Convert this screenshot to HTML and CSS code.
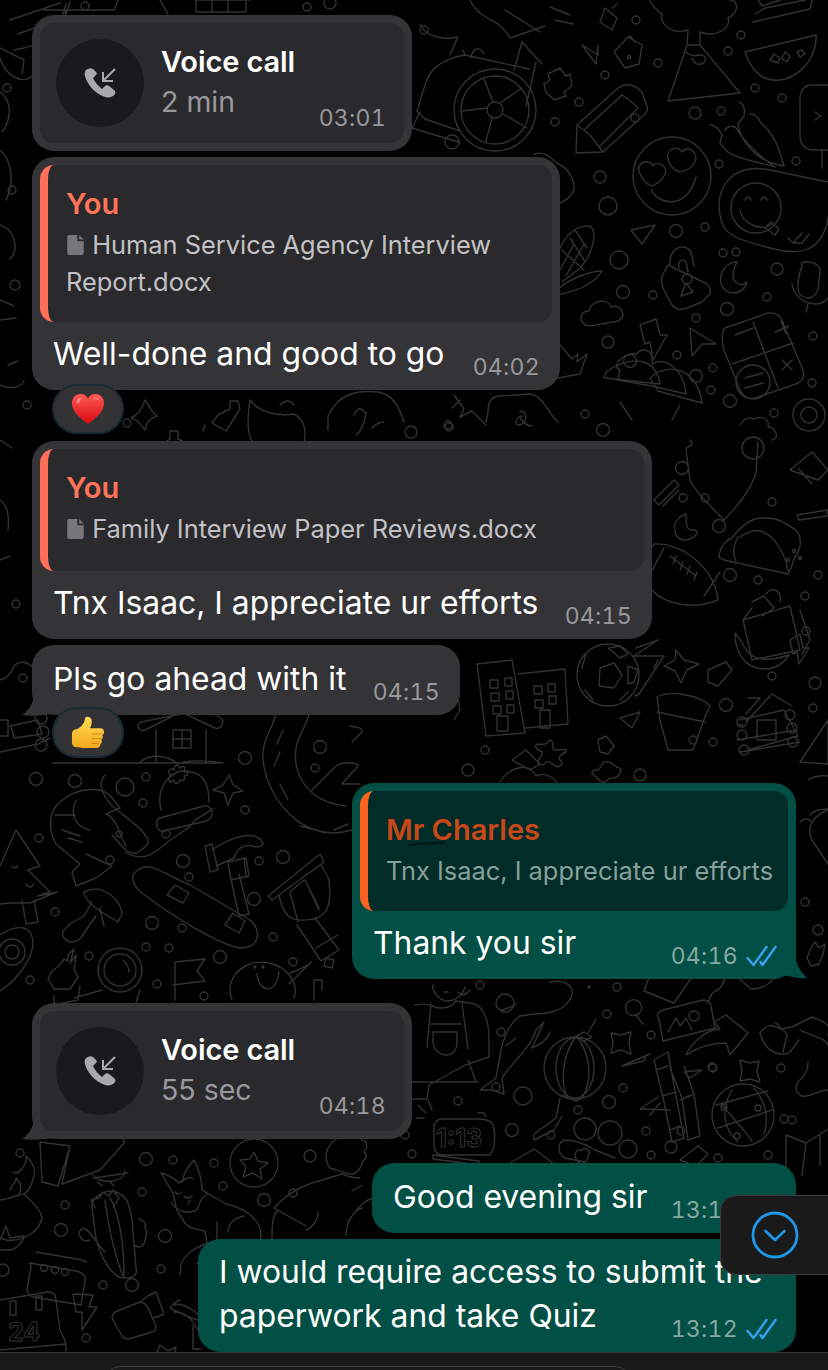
FILE: index.html
```html
<!DOCTYPE html>
<html lang="en">
<head>
<meta charset="utf-8">
<title>Chat</title>
<link rel="stylesheet" href="styles.css">
</head>
<body>
<div class="screen">
<svg class="doodles" viewBox="0 0 828 1370" aria-hidden="true">
  <!-- top row -->
  <path d="M10 20 L60 3 M18 34 L62 18 L66 4 M14 50q50 -8 52 -40 M0 58 C6 78 24 84 32 76 M70 2 l-6 18 M0 48l24 12 -2 14"/>
  <circle cx="85" cy="6" r="4"/><circle cx="7" cy="88" r="4"/>
  <path d="M118 0 l-4 10 -70 0 M160 0 l8 14 M195 0 l55 0 M196 0v12h50V0 M212 0v12 M228 0v12"/>
  <circle cx="307" cy="7" r="4"/><circle cx="330" cy="3" r="6"/><circle cx="424" cy="30" r="4"/>
  <!-- wheelchair -->
  <circle cx="495" cy="110" r="41"/><circle cx="495" cy="110" r="34"/><circle cx="495" cy="110" r="8"/>
  <path d="M487 108l-25 3 M500 103l22-15 M503 114l24 14 M492 118l-6 23 M493 102l-9-23"/>
  <path d="M465 55q-34 6 -40 30 l-8 26 8 8 35 12 M465 55l64 14 M463 50l2 5 M472 58c-2-8 8-14 12-4 M514 70l8-28 20 22 M536 62l-10 44 M420 112l-8 16 46 14 M452 135a7 7 0 1 0 0.1 0"/>
  <path d="M420 25c6 10 20 16 38 12l-8 18 M470 0c10 22 28 16 40 38l35-12 M505 10l35 22 M555 20l18 4 M550 7l20 8"/>
  <path d="M605 8 L617 18 612 30 600 22z M612 8l5-4 M628 37l14 8 -3 19 -14 4 -11-16z M627 38l3-2 5 6" />
  <circle cx="629" cy="57" r="1.5"/><circle cx="636" cy="20" r="4"/>
  <path d="M582 45l16 10 0-10 -2 19z"/>
  <path d="M548 74l12-6 6 8 4-2 2 12 -8 6 2 4 -12 4 -8-8 -2 -8 6-4z"/>
  <circle cx="579" cy="102" r="4"/><circle cx="555" cy="122" r="4"/><circle cx="605" cy="75" r="4"/>
  <circle cx="658" cy="63" r="4"/><circle cx="635" cy="118" r="4"/><circle cx="695" cy="113" r="6"/><circle cx="721" cy="111" r="4"/>
  <!-- pencil -->
  <path d="M576 153 L577 125 L618 88 Q630 80 642 92 L646 104 Q650 110 644 115 L603 152 Z M577 125 L590 135 L603 152 M622 95 L584 130 M638 108 L600 146 M622 95 Q630 100 638 108"/>
  <!-- volcano -->
  <path d="M668 101 L740 93 L700 45 L687 45 Z M687 45 L688 30 C672 35 660 25 662 14 C650 5 650 0 650 0 M700 45 L700 32 C716 38 732 28 728 18 C740 12 738 0 730 0 M686 52 C695 60 700 52 704 56 C710 62 696 70 692 58"/>
  <circle cx="741" cy="35" r="4"/><circle cx="728" cy="51" r="4"/><circle cx="755" cy="88" r="4"/><circle cx="782" cy="98" r="4"/>
  <path d="M745 52 L816 35 C818 62 790 88 765 78 C755 74 748 62 745 52Z"/>
  <path d="M770 60l4-6 6 4-2 5z M785 52l5 4-3 6-5-3z M797 52l5-2 3 4-5 3z"/>
  <path d="M755 14 L765 8 L805 0 M753 22 L810 9 L812 0 M758 0 L762 6 L780 0"/>
  <!-- tongue ice cream -->
  <path d="M828 85 H812 Q800 85 800 100 V135 Q800 150 815 150 H828 M822 150V168 M815 112l6 4-6 4"/>
  <circle cx="796" cy="161" r="4"/><circle cx="719" cy="164" r="4"/>
  <!-- chilli -->
  <path d="M739 102c5 2 6 8 5 14l-6 8c3 18 18 38 46 42 -4-14 -8-30 -22-42 -4-4 -4-10 -12-10 M710 125c6 0 10 6 12 10 l-2 8 5 6c8 10 32 12 50 18 -10-6 -32-26 -38-38 -3-4 -10-4 -12 2"/>
  <!-- heart-eye face -->
  <circle cx="672" cy="176" r="39"/>
  <path d="M640 174c-6-12 10-16 13-8 4-6 17 0 11 10 -3 6 -9 8 -11 10 -5 0 -10-6-13-12z M668 160c-3-10 9-16 14-8 6-8 17 0 13 10 -3 6 -7 8 -16 10 -5-2 -9-6 -11-12z M651 189c6 16 36 22 45-12"/>
  <!-- smile blob -->
  <path d="M770 170 L828 182 M770 170 C730 162 715 190 720 215 C722 235 738 240 770 248 C800 256 826 255 830 205"/>
  <circle cx="756" cy="208" r="25"/>
  <path d="M740 210c2 14 22 22 32 14 M745 200q3-6 6 0 M761 200q3-6 6 0 M765 228l6-6 8 7-4 6z M788 238l5 5 9-10 M794 243l8 0 7-9"/>
  <!-- right-top small doodles -->
  <circle cx="600" cy="177" r="6"/><circle cx="608" cy="206" r="9"/><circle cx="676" cy="231" r="6.5"/><circle cx="705" cy="227" r="4"/><circle cx="723" cy="253" r="4"/><circle cx="777" cy="269" r="6"/>
  <path d="M631 230l24-5 -13 19z"/>
  <!-- corn -->
  <path d="M560 248c8-18 20-22 28-22 10 0 7 26 -8 42 l-18 14 M562 250l22 20 M570 238l14 22 M575 230l12 18 M560 270l14-26 M566 276l18-32 M555 295c25-4 40-12 47-24 -10 0-36 8 -45 20"/>
  <circle cx="619" cy="260" r="9"/><circle cx="623" cy="292" r="6.5"/><circle cx="653" cy="295" r="4"/>
  <!-- flame, cloud, bolt etc. -->
  <path d="M534 154c12-4 18 6 24 10 12 4 20 22 14 30 -6 8 -14 10 -18 10"/>
  <path d="M585 325c-7-6 -4-14 4-14 2-10 18-14 22-4 8-4 18 8 7 14 -6 2 -6 0 -14 3 -4-2 -8 4 -19 1z"/>
  <path d="M640 325l16-6 4 16 7 0 -14 25 -3-18 -5 2z"/>
  <path d="M690 328l2 28 10-12 14 0z"/>
  <circle cx="608" cy="342" r="6"/><circle cx="630" cy="361" r="6.5"/><circle cx="677" cy="355" r="4"/><circle cx="696" cy="376" r="6.5"/><circle cx="713" cy="368" r="4"/><circle cx="711" cy="390" r="4"/><circle cx="730" cy="401" r="6.5"/><circle cx="774" cy="413" r="4"/><circle cx="812" cy="383" r="4"/><circle cx="813" cy="336" r="4"/><circle cx="696" cy="318" r="4"/>
  <!-- padlock -->
  <path d="M668 265 L705 283 Q712 287 710 294 L702 302 L684 309 Q676 310 672 305 L664 290 Q660 282 662 276 Z M670 265c-2-16 14-24 21-13l3 14 M679 268c-2-8 5-10 7-6 l2 10"/>
  <circle cx="687" cy="279" r="5"/><path d="M686 283l-5 13 12-4z"/>
  <path d="M737 262c-14 0 -22 18 -12 28 8 6 20 2 22-8 -6 6 -14 0 -14-6 0-6 2-10 4-14z"/>
  <circle cx="736" cy="252" r="4"/><circle cx="767" cy="297" r="4"/><circle cx="727" cy="309" r="6.5"/>
  <path d="M802 266 Q800 262 806 262 Q820 262 820 272 L818 290 Q812 302 802 296 Q795 292 800 272z M792 284c2 12 12 20 24 20 8 0 12-6 14-8 M808 304l-2 8"/>
  <!-- calculator -->
  <path d="M725 328 L768 313 Q778 312 782 320 L803 370 Q806 380 796 384 L755 398 Q745 400 740 390 L724 350 Q720 334 725 328z M753 322 L778 388 M732 364 L793 343 M735 335l18-7 M775 332l14-6 M781 321l5 13 M782 370l10-10 M782 360l10 10"/>
  <circle cx="753" cy="382" r="17"/><path d="M745 378l18-5 M745 388l18-5"/>
  <!-- lower right -->
  <circle cx="809" cy="415" r="16"/><circle cx="809" cy="415" r="8"/>
  <path d="M740 425c5-8 10-8 14-6 8-4 16 0 14 8 8 0 12 12 4 13 M620 370c-10-4 4-18 16-16 10-10 18 0 16 10 14-8 32 6 34 30l-34-8 -34-6z"/>
  <path d="M606 372c26-18 50-14 54 12l-56-6z M650 378c20-18 48-8 52 25l-44-12z M620 402l12 18M680 405l-8 15"/>
  <path d="M560 345l12 14 6-5 -1 8 10 -8 -7 20 -22 4c-8 0 -5-14 -14-20z"/>
  <path d="M500 396c-12 0 -12 12 -12 16 l-2 10 M500 396l30-2c14 2 18 20 28 28 M520 418c4 6 8 8 12 8 M520 412c6-4 8 8 2 12 -8 4 -8-6 0-8"/>
  <path d="M454 395l10 14-4 8 12 -6 14 14 M460 400l-8 8"/>
  <circle cx="449" cy="427" r="4"/><circle cx="585" cy="414" r="4"/><circle cx="603" cy="430" r="6.5"/>
  <!-- middle right -->
  <path d="M690 440c6 8 -4 4 -4 10l4 30c6 12 18 24 34 40 8-8 28-30 32-48l2-30" />
  <circle cx="753" cy="448" r="11"/><circle cx="682" cy="468" r="6.5"/><circle cx="683" cy="498" r="4"/><circle cx="705" cy="498" r="4"/><circle cx="772" cy="502" r="4"/><circle cx="719" cy="526" r="6.5"/>
  <path d="M654 500l20-20 5 5 -20 20z M663 506l16-16"/>
  <path d="M790 470l22-18 16 18 -10 10z M798 468l14 16 M797 515l30-5v6l-28 4z"/>
  <path d="M686 514c-18 6 -12 26 -2 26 8 0 18-8 10-10 -6 0 -8 0 -8-16z"/>
  <!-- football -->
  <path d="M654 544c26-2 60 22 64 56 -30 12 -66 2 -72-22 -2-12 2-26 8-34z M664 548l-16 30 M704 596l16-24 M670 556l26 20 M676 556l-3 8 M683 562l-3 8 M690 566l-3 8 M697 572l-3 8"/>
  <!-- taco -->
  <path d="M732 538c12-16 22-20 30-20 8 0 16 0 24 6 8 4 16 8 14 22 -2 8 -8 14 -8 20 l-4 8 -64-14c-6-2 -6-4 -4-8 2-8 6-12 12-14z M740 537c6-4 14-8 20-6 16 4 26 26 28 40 M738 537c-4 8 -6 14 -2 24"/>
  <circle cx="794" cy="551" r="1.5"/><circle cx="800" cy="558" r="1.5"/><circle cx="788" cy="560" r="1.5"/>
  <circle cx="730" cy="575" r="6.5"/><circle cx="758" cy="580" r="4"/><circle cx="818" cy="575" r="4"/><circle cx="805" cy="596" r="4"/><circle cx="806" cy="631" r="4"/>
  <!-- bag -->
  <path d="M743 620 L790 606 L800 650 L752 660z M752 608l-9 12 M752 602l12-6 10 12-12 8 M766 594c6-8 16-4 14 8 M800 610l10 30 -8 14 M735 633c0 20 10 36 30 36 12 0 20-8 24-14 -12 4 -30 8 -40-2 -6-6 -8-14 -14-20z"/>
  <!-- soccer ball -->
  <circle cx="608" cy="675" r="31"/>
  <path d="M600 668l14-5 8 12 -8 13 -15-2z M608 648l12-2 8 8 -8 4z M586 654l-4 14 M628 666l10 4 -4 12 -6 2z M585 690l8 10 M620 700l8-8"/>
  <path d="M636 648l22-8 -24 16 30 0 -25 38 -4 2 M658 660l-4 8"/>
  <path d="M676 650l8 10 15 4 -12 6 -6 13 -6-12 -11-5 11-6z"/>
  <path d="M708 670l18-8 6 8 -14 16 -10-4z"/>
  <!-- buildings -->
  <path d="M477 664 L512 660 L525 733 L486 736z M518 674 L565 669 L568 724 L525 728 M490 680h8v8h-8z M505 678h7v8h-7z M491 693h8v8h-8z M506 691h7v8h-7z M493 706h8v8h-8z M507 705h7v8h-7z M534 686h8v8h-8z M548 684h7v8h-7z M535 700h8v8h-8z M549 696h7v8h-7z M497 716h11v15h-11z M540 710h10v18h-10z"/>
  <!-- pot -->
  <path d="M657 697 C670 690 700 695 710 706 L705 717 L693 750 L668 750 L660 720z M657 712l48 10"/>
  <path d="M620 718l20-6 -8 16z"/>
  <!-- log house -->
  <path d="M740 720l44-10 14 26 -50 14 M748 698l12 0 -14 16 M746 722l26-28 20 12 M737 725h6 M737 740l60-10 M740 752l60-10 M757 720h19v20h-19z"/>
  <circle cx="742" cy="722" r="5"/><circle cx="742" cy="735" r="5"/><circle cx="744" cy="750" r="5"/><circle cx="790" cy="715" r="5"/><circle cx="792" cy="728" r="5"/><circle cx="793" cy="742" r="5"/>
  <circle cx="726" cy="705" r="6.5"/><circle cx="772" cy="676" r="4"/><circle cx="693" cy="740" r="4"/><circle cx="713" cy="742" r="4"/><circle cx="815" cy="683" r="6"/><circle cx="813" cy="708" r="4"/>
  <path d="M790 640l10-6 3 14 6 0 -10 16 -2-12 -4 2z"/>
  <path d="M800 762l28-42v44z"/>
  <path d="M550 740c4 0 2 8 4 10 4 0 14-2 12 2 -4 2 -8 4 -6 8 4 4 0 8 -4 6 -4-2 -6-6 -10-4 -2 4 -8 4 -8 0 0-4 6-6 4-10 -4-2 -10-6 -4-8 4 0 6 2 10-2z"/>
  <path d="M598 740l8-4 8 10 -6 8 -8-2z"/>
  <path d="M512 760l14-10 14 14 -10 6z M598 770c6-6 4-10 10-8 6 0 6 6 12 6 2 4 -2 10 -8 10 -6 0 -4 6 -10 4 -6-2 -6-8 -10-8 0-4 2-4 6-4z"/>
  <circle cx="468" cy="770" r="6"/><circle cx="485" cy="750" r="4"/><circle cx="640" cy="775" r="6"/>
  <path d="M500 782c10-16 30-20 36-6 12-6 24 8 20 8"/>
  <path d="M450 700c0-8 6-8 8-4l2 14-6 10"/>
  <!-- left side -->
  <path d="M0 92c14 10 10 30 2 40 M0 150c10 8 16 30 6 50"/><circle cx="12" cy="190" r="4"/>
  <path d="M0 225c14 4 20 24 10 34 M0 300l14 6 M0 320l16-2 M8 365l10-4 M0 385c8 4 20 4 24-4"/>
  <circle cx="15" cy="285" r="5"/><circle cx="27" cy="405" r="4"/>
  <path d="M72 413l-10 12 M90 396c-18 8 -16 14 -4 20 M145 400c6 8 4 10 12 16 -6 2 -10 4 -12 14 -6-8 -8-10 -14-12 8-4 10-8 14-18z M160 445l10-6 0-8 8 0 0 8 8 4 -6 8 -8 0 -4 8 -8-4 2-8z M218 415l12-6 0-8 8 0 2 8 -14 22 -14-8z M205 425l-2 6"/>
  <circle cx="127" cy="423" r="4"/>
  <path d="M250 400c10 14 30 16 44 14 14 6 14 30 4 38 -10 10 -30 8 -40-4 -10-8 -12-20 -8-48z M270 385l8-8 -4 8 M280 405q8-8 14 0"/>
  <path d="M328 430l0 -14c10-22 28-26 50-24 16 2 22 18 26 30 M354 415c4-8 6-8 12-2 -2 10 -4 18 -10 22 M372 428q6-6 12-6"/>
  <circle cx="448" cy="425" r="4"/><circle cx="411" cy="432" r="6"/>
  <path d="M0 440l12 8 M0 500c6 4 10 14 8 30 M0 560l10-4"/><circle cx="16" cy="604" r="4"/>
  <path d="M0 680c8-2 12-8 14-14 8-8 16-2 22 4"/><circle cx="23" cy="678" r="4"/>
  <path d="M0 720h8v16h-8 M10 726l28-6 4 14 -28 4 -2-8z M0 752l38-8 12-6"/><circle cx="41" cy="718" r="6"/><circle cx="43" cy="732" r="6"/><circle cx="41" cy="745" r="6"/>
  <!-- house -->
  <path d="M52 763 L222 763 M140 762c10-8 26-8 38 2 6-4 30-4 45-1 M156 730 L156 762 M206 730 L206 762 M181 714l-40 8 c-6 4 -2 10 4 8l36-18 34 16c6 2 10-6 6-10l-40-22 M173 730h18v18h-18z M182 730v18 M173 739h18"/>
  <circle cx="245" cy="758" r="6.5"/>
  <path d="M277 710c-4 20 -16 30 -14 50 4 40 40 80 80 72 8-2 20-4 25-8 M310 710c-2 18 -18 28 -14 54 4 24 24 40 50 42 M283 730l-6 14 M280 752l-6 14 M280 784l8 16 M300 826l16 4 M334 830l14-6"/>
  <circle cx="320" cy="747" r="6.5"/><circle cx="315" cy="768" r="4"/><circle cx="36" cy="779" r="6.5"/><circle cx="75" cy="781" r="6.5"/><circle cx="125" cy="787" r="9"/><circle cx="146" cy="777" r="4"/><circle cx="143" cy="803" r="4"/><circle cx="245" cy="810" r="4"/>
  <path d="M312 790l24-24c10-6 24-2 22 0l-16 18h18 M350 726c6 2 12 0 12 6l-10 10"/>
  <!-- winter hat -->
  <path d="M161 810c-6-26 14-44 30-38 14 2 18 14 18 30 M160 818l44-12c8-2 12 12 2 15l-42 10c-8 2 -10-12 -4-13z"/>
  <path d="M170 782c-4-4 2-6 0-8 -4-4 2-6 4-4 0-6 4-6 6-2 4-4 6 0 4 4 6 0 4 4 0 4 2 4 -2 6 -4 4 -2 6 -8 2 -6 0 -2 0 -4 4 -4 2z"/>
  <path d="M213 790l10-5 6-10 4 10 10 6 -10 2 -5 12 -4-12z"/>
  <path d="M105 775c-8 8 -2 20 6 30 14 12 30 22 34 30 8 8 0 12 -8 18 -10 2 -14-6 -25-18 M125 852c20 12 30 0 48-14 6-4 20-12 20-16 2-4 12-6 20-14"/>
  <!-- shrimp -->
  <path d="M60 802c18-16 44-16 52-4 l8 10 -14 6 c10 4 14 20 14 20 l6 12 M60 802c-12 10 -12 28 -4 42 l24 20 -8 8 4 14 20-8 16-12 -26-12 M76 800c-6 14 -2 26 14 30 M62 830l18 6 M55 815l20 0 M68 838l14 4"/>
  <circle cx="119" cy="834" r="3"/><circle cx="39" cy="838" r="4"/><circle cx="110" cy="860" r="4"/><circle cx="166" cy="834" r="4"/>
  <path d="M16 830 L40 866 L28 870 L50 892 L38 896 L57 892 L30 903 L10 903 L0 904 M16 830 L0 866 M22 900l4 24 12-2 -4-22 M12 866q2 4 6 0 M26 884q4 6 8 0"/>
  <!-- hammer -->
  <path d="M205 846l7 -2 6 26 -8 2z M212 850c20-14 44-20 50-8 4 4 -4 6 -10 4 -10-2 -16 4 -18 12l-18 8 M228 862l18-4 3 18 -18 4z M229 870l10 46 10 -2 -10-40 M246 876l-2 -18"/>
  <circle cx="259" cy="861" r="4"/><circle cx="283" cy="857" r="6.5"/><circle cx="183" cy="861" r="6.5"/><circle cx="189" cy="877" r="4"/><circle cx="254" cy="899" r="6.5"/>
  <!-- snowboard -->
  <path d="M138 870 C150 860 165 875 190 885 L250 920 C262 930 260 948 240 948 C220 945 170 915 145 895 C130 885 130 875 138 870z M167 895l8-10 14 8 -6 10z M225 925l8-12 12 8 -6 12z"/>
  <!-- drum -->
  <path d="M268 896l52-42 4 8 -52 38z M279 895c6 30 20 26 35 24 12-4 18-10 15-40 l-8-14 M290 892l8 30 M305 880l14 30 M290 892l14-12 M305 880l14 28 M315 918l24 32 -18 11 -24-36 M316 948l22-13"/>
  <!-- mushroom -->
  <path d="M84 892c20-10 38 10 38 22 l-4 8 c-12-8 -28-14 -34-28z M92 902l-8 14 -14 8 -6 6 c-4 6 2 12 8 12 8 0 10-6 14-12l10-14 M100 908l4 18"/>
  <circle cx="55" cy="912" r="4"/><circle cx="152" cy="923" r="6.5"/><circle cx="182" cy="928" r="4"/><circle cx="273" cy="937" r="4"/><circle cx="146" cy="947" r="4"/><circle cx="169" cy="948" r="4"/><circle cx="220" cy="957" r="6.5"/><circle cx="293" cy="962" r="4"/>
  <!-- avocado -->
  <path d="M0 935c15-10 32-12 33 8 0 18 -20 40 -33 48"/><circle cx="12" cy="952" r="13"/><circle cx="12" cy="952" r="7"/>
  <circle cx="30" cy="980" r="4"/>
  <path d="M60 965l4-6 4 2 0-6 6-6 -4 14 6-8 -2 14 4 8 -8 12 -16 0 -6-10 4-8z M80 986l-2 14 -20 4 M54 996l0 8"/>
  <circle cx="120" cy="970" r="22"/><circle cx="120" cy="970" r="16" />
  <path d="M123 960c4 4 6 8 6 12 M102 990l-28 8 M140 990l-5 16"/>
  <circle cx="89" cy="956" r="4"/><circle cx="157" cy="984" r="4"/><circle cx="204" cy="996" r="4"/>
  <path d="M175 1000V962l30-3-8 12 8 10-32 4"/>
  <!-- planet face -->
  <path d="M232 1000c-6-16 2-30 18-36 10-4 30-2 40 12 6 8 6 16 4 22"/><path d="M290 973c12-4 22-10 21-11l-22 22 M257 974c2 20 20 20 22-2"/><circle cx="255" cy="967" r="1"/><circle cx="263" cy="967" r="1"/>
  <path d="M326 958l8 2-2 8-8-2z M314 1000l0-20 8 0 0 10"/>
  <!-- right of outgoing message -->
  <path d="M808 780c10-6 20-4 20-4 M810 815c4-6 14-6 18-6 M812 840c-6-12 0-24 16-30 M812 840l16 24 M800 822c4-4 8-4 12 0"/>
  <circle cx="805" cy="902" r="4"/><circle cx="818" cy="930" r="5"/>
  <path d="M810 950l5-8 4 6 6-4 -2 10 -4 10 -8 2 -4-8z"/>
  <!-- overalls man -->
  <path d="M415 1005c10-2 15 0 16 0 8 6 24 2 24-4 l14 2c14 0 20 16 20 36 l0 18-24 8 -36 20 -2 14 -32 0 M431 1003l-4 44 M462 1003l6 46 M431 1024h30 M433 1032h24v12c-2 16 -22 14 -24-2z M412 1082h66 M468 1060l8 22 M458 992q6 6 12-2"/>
  <path d="M433 985c-2 4 6 16 14 16 8 0 16-6 18-14 M444 992l4 0 M428 975h34"/>
  <circle cx="505" cy="1003" r="9"/><circle cx="480" cy="985" r="4"/><circle cx="501" cy="1032" r="4"/><circle cx="496" cy="1087" r="4"/><circle cx="523" cy="1096" r="9"/><circle cx="458" cy="1101" r="4"/>
  <!-- koi -->
  <path d="M550 982c20-4 28 10 18 20 -6 10 -24 12 -34 12 l-14 2c-12 8 -18 26 -20 40 l-4 22 -16 12 12 0 12 4 -2-16 c12-18 30-32 34-48 l8-8 -12 26c10-4 16-10 18-16 M500 1010c4 0 14-4 16-6 M506 1046l10-8"/>
  <circle cx="589" cy="987" r="1"/>
  <circle cx="607" cy="1014" r="4"/><circle cx="617" cy="987" r="4"/><path d="M628 1002a8 8 0 1 1 -0.1 0.1 M635 1014l8 10"/>
  <!-- lantern -->
  <circle cx="575" cy="1068" r="31"/>
  <ellipse cx="575" cy="1068" rx="19" ry="30"/><path d="M575 1038c-14 20 -14 44 -8 60 M578 1038c14 20 14 44 4 60 M576 1036l8-4 8 5 -8 4z M588 1033l8-14 M562 1095l14 6 8-4 M560 1098l-4 20 -22 16 v6l20-10 8-14"/>
  <path d="M611 1033l10 2 10-3-2 11 2 11-10-4-10 3 2-10z"/>
  <circle cx="651" cy="1035" r="4"/><circle cx="623" cy="1088" r="4"/><circle cx="609" cy="1102" r="6.5"/><circle cx="578" cy="1110" r="4"/><circle cx="681" cy="1131" r="4"/><circle cx="646" cy="1131" r="4"/><circle cx="712" cy="1067" r="4"/><circle cx="781" cy="1068" r="4"/><circle cx="792" cy="1120" r="4"/>
  <!-- bamboo -->
  <path d="M650 1054l-28 12 22-5 2-6 M654 1060l14-8 8 44 8 42-12 4-8-40z M656 1070l12-4 M662 1096l14-4 M670 1130l10-4 M670 1068l12 30 6 42 12-4-6-42-10-28 M680 1100l14-6 M670 1110l-30 -1 18-12 M650 1115l10-12 M684 1072l18-2 -12 8z"/>
  <!-- photo + arrow -->
  <path d="M663 1010l40-10c6 0 8 2 8 6l4 22 -52 13-4-22c-4-4 0-8 4-9z M668 1032l8-14 4 8 6-8 6 12"/>
  <circle cx="694" cy="1016" r="5"/>
  <path d="M714 1022l12-7 22 18-18 22-4-12c-14 0-28 4-40 12 6-14 22-26 34-26z"/>
  <path d="M740 1060l10 3 9-2-2 11 3 10-10-3-10 2 2-10z"/>
  <circle cx="713" cy="1068" r="4"/>
  <path d="M650 975l-6 16 30 12 18-26 M725 975c0 8 -6 16 -10 16 -6 4 -4 8 -8 12 M735 975l16 14c10 0 20-4 24-14"/>
  <!-- socks -->
  <path d="M760 1033c10-14 16-4 22-4l10-2 20-10 c10 4 20 6 16 18 M760 1033c4 14 12 22 26 21 8-2 10-14 14-14 M775 1022l12 12 -4 18 M800 1030c10 6 28 8 28 16 M828 1090c-10 0 -18 8 -26 6 -8-4 -8-12 0-18 4-4 6-10 6-16"/>
  <!-- globe -->
  <circle cx="743" cy="1115" r="31"/><path d="M716 1105l52-14 M718 1128l54-18 M732 1090c-12 20 -8 40 6 52 M754 1088c14 16 14 34 10 46 M722 1105c8 10 20 22 30 36"/><circle cx="724" cy="1107" r="3"/><circle cx="758" cy="1108" r="3"/><circle cx="737" cy="1136" r="3"/>
  <circle cx="784" cy="1119" r="4"/><circle cx="768" cy="1155" r="4"/>
  <path d="M786 1135v35M786 1135l20 8 M806 1143l-4 32 M806 1143l22-14 M820 1135v30"/>
  <!-- clock -->
  <path d="M434 1125q2-6 8-6h36q10 0 14 4 4 6 2 24l-4 8h-48q-6 0-8-8z M433 1155l46 6v4l-46-6z M478 1113q6-2 8 4"/>
  <text class="dig" x="436" y="1147">1:13</text>
  <path d="M418 1105l8 8 M428 1100l4 10 M416 1118h8"/>
  <circle cx="405" cy="1135" r="4"/><circle cx="412" cy="1154" r="4"/><circle cx="512" cy="1130" r="6.5"/><circle cx="551" cy="1135" r="4"/><circle cx="585" cy="1129" r="11"/><circle cx="610" cy="1133" r="12"/><circle cx="628" cy="1149" r="9"/><circle cx="671" cy="1147" r="6"/><circle cx="651" cy="1155" r="4"/><circle cx="718" cy="1158" r="4"/>
  <path d="M565 1140c10 0 20 4 30 10l20 8 M565 1140c-8 2 -8 14 0 18l20 4 M582 1150c4-4 10 2 6 6 0 4-2 6-6 8-6-2-10-10-4-14z"/>
  <path d="M510 1163l24-14 24 18 M680 1160l18-14 10 8-12 12z"/>
  <!-- bottom left -->
  <path d="M40 1142l30 4-12 40-16-4z M70 1146l-8 38 38-14 25-28-25-28 M94 1178l34-5 M93 1175c4 8 30 10 32-4 M98 1182l4 4M110 1182l4 4"/>
  <circle cx="20" cy="1153" r="4"/><circle cx="173" cy="1160" r="4"/><circle cx="146" cy="1159" r="6.5"/><circle cx="65" cy="1205" r="4"/><circle cx="214" cy="1163" r="4"/><circle cx="293" cy="1193" r="4"/><circle cx="310" cy="1156" r="6"/><circle cx="264" cy="1200" r="6.5"/><circle cx="223" cy="1186" r="4"/><circle cx="142" cy="1192" r="4"/><circle cx="61" cy="1230" r="6.5"/><circle cx="165" cy="1236" r="6.5"/><circle cx="3" cy="1270" r="6"/><circle cx="161" cy="1269" r="4"/><circle cx="103" cy="1285" r="4"/><circle cx="132" cy="1285" r="6.5"/><circle cx="86" cy="1338" r="4"/>
  <circle cx="254" cy="1163" r="24"/>
  <path d="M254 1152l4 9 10 2-8 6 2 10-9-6-10 4 3-10-6-7 10-1z"/>
  <!-- fox -->
  <path d="M161 1173l12 20 4 18 8 12c4 6 12 6 20 8l2 12M161 1173c8 2 14 6 18 10 6-4 12-8 14-4 M194 1160c-6 6 -10 12 -12 22 M194 1160c6 12 8 20 8 30l6 4 -6 4-5 12c-10 4-20 2-26-8 M202 1190l24 14c20 4 34 16 35 30 0 8 -2 12 -4 14 M217 1242l0-20 M228 1232c0-8 6-14 16-16 M184 1196q4 4 8 0 M175 1192q4 4 6 0 M190 1200l-2 4"/>
  <!-- man -->
  <path d="M274 1208c14-16 32-24 48-28 l20-6 M342 1174c10 4 16 4 18 4 M274 1208l32 18 M318 1212c0 8 -6 16 -12 18 M272 1240c0-14 0-24 6-30 M362 1185l-10 6"/>
  <path d="M330 1168c-6-8 -6-22 8-30 6-6 18-6 24 2 8 2 4 10 2 12 4 2 2 8 -2 10 0 6 -6 12 -10 12 -8 0 -14-4 -22-6z"/>
  <path d="M348 1222c12-18 18-22 25-24 M346 1236c0-14 8-26 16-28 M375 1216c0-4 6-4 8 0"/>
  <path d="M180 1275l1-11 c4-10 16-18 30-22 M197 1264c4-6 10-4 14-8"/>
  <path d="M175 1305c4-2 12 0 24 10 M180 1300c-6 2 -8 6 -10 8 12 6 20 10 28 12 M174 1312c6 0 14 0 24 18 M193 1325v24 M193 1349h8"/>
  <path d="M160 1345l8 6 8-4-2 8 10 3h-34l6-3z"/>
  <!-- diya -->
  <path d="M13 1172c6 4 14-8 13-16 4 4 10 10 8 20 -2 8 -6 16 -10 18 M0 1200c8 0 18-6 24-6 8 8 16 14 18 24 -2 10 -14 24 -36 22 l-6-2 M10 1190c2-6 6-6 6-12 6 6 6 12 2 18"/>
  <path d="M0 1240l6-14 4 12 14-2c-2 8 -8 12 -12 14l-12 0"/>
  <!-- cactus -->
  <path d="M92 1208c-2-12 18-22 28-14 8 4 10 14 12 26l4 48c2 6 -2 10 -12 10 -12 0 -24-22 -28-40z M105 1200c4 30 10 56 18 76 M110 1198c4 6 14 30 14 78 M135 1246c10 4 10-6 12-14l-2-4c2-10 -6-6 -6-10 M90 1240c-6 2 -8 0 -9-2 -4-6 -2 -6 2-10 8 2 12 14 22 24 M95 1208l-4-8 8-2 4-6 6 4 4-6 6 8 -6 10"/>
  <!-- dots box -->
  <path d="M30 1263l46 8c8 2 10 6 9 10l-4 24-48-8c-6-2 -6-6 -6-8l4-22c0-4 -2-4 -1-4z M36 1252l46 8 4 2"/>
  <circle cx="44" cy="1268" r="3.5"/><circle cx="55" cy="1270" r="3.5"/><circle cx="65" cy="1272" r="3.5"/>
  <!-- calendar -->
  <path d="M0 1300l48-8c6 0 8 4 8 8l4 30c4 8 6 12 6 18l0 3 M10 1301v14h6v-14z M36 1296v14h6v-14z M0 1350l66-6"/>
  <text class="dig" x="8" y="1341">24</text>
  <path d="M73 1294l20 1-4 12 8 0-15 23 0-18-6 0z"/>
  <path d="M115 1312l25-10c4 0 6 2 8 6l8 18c0 4 -2 6 -4 6l-20 6c-6 2 -8 0 -10-2l-10-18c0-2 0-4 3-6z M140 1302l8-6 8-4 8 22-10 4"/>
</svg>

<main class="chat">
  <article class="msg in w380">
    <div class="call">
      <div class="call-icon">
        <svg viewBox="0 0 32 30" class="call-svg"><path class="phone" d="M4 1C1 2 0 5 1 8c2 8 9 17 20 21 4 1 8 0 10-3 1-2 0-3-1-4l-5-4c-1-1-3-1-4 0l-3 3c-4-3-7-7-9-11l3-3c1-1 1-2 0-3L9 1C7 0 6 0 4 1z"/><path class="arrow" d="M31 1 L19 13 M19 4 V13 H29"/></svg>
      </div>
      <div class="call-copy"><strong>Voice call</strong><span>2 min</span></div>
      <time class="stamp call-stamp">03:01</time>
    </div>
  </article>

  <article class="msg in w528 tile">
    <div class="quote">
      <b class="author">You</b>
      <p class="quoted"><svg class="file" viewBox="0 0 20 24"><path d="M3 1h9v7h7v13a2 2 0 0 1-2 2H3a2 2 0 0 1-2-2V3a2 2 0 0 1 2-2z M14 1l5 5h-5z"/></svg> Human Service Agency Interview<br>Report.docx</p>
    </div>
    <div class="row"><span class="text">Well-done and good to go</span><time class="stamp">04:02</time></div>
  </article>
  <div class="reaction"><svg viewBox="0 0 36 34" class="emoji"><defs><linearGradient id="hg" x1="0" y1="0" x2="0" y2="1"><stop offset="0" stop-color="#ff5a55"/><stop offset="1" stop-color="#d8090f"/></linearGradient></defs><path fill="url(#hg)" d="M18 33C8 26 1 19 1 11 1 5 5 1 10 1c4 0 7 2 8 5 1-3 4-5 8-5 5 0 9 4 9 10 0 8-7 15-17 22z"/><path fill="#ffb3ad" opacity=".75" d="M6 9c1-3 4-4 6-3-2 1-4 3-4 6z M24 5c3-1 6 1 7 4-2-2-4-3-7-3z"/></svg></div>

  <article class="msg in w620 gap-7 tile">
    <div class="quote tall">
      <b class="author">You</b>
      <p class="quoted"><svg class="file" viewBox="0 0 20 24"><path d="M3 1h9v7h7v13a2 2 0 0 1-2 2H3a2 2 0 0 1-2-2V3a2 2 0 0 1 2-2z M14 1l5 5h-5z"/></svg> Family Interview Paper Reviews.docx</p>
    </div>
    <div class="row"><span class="text">Tnx Isaac, I appreciate ur efforts</span><time class="stamp">04:15</time></div>
  </article>

  <article class="msg in w428 tailed-left">
    <div class="row plain"><span class="text">Pls go ahead with it</span><time class="stamp">04:15</time></div>
    <svg class="tail tail-left" viewBox="0 0 30 30"><path d="M14 0 C13 14 8 24 0 29 C8 30 18 30 30 28 V0z"/></svg>
  </article>
  <div class="reaction lower"><svg viewBox="0 0 36 36" class="emoji"><defs><linearGradient id="tg" x1="0" y1="0" x2="0" y2="1"><stop offset="0" stop-color="#ffdd55"/><stop offset="1" stop-color="#f5a81c"/></linearGradient></defs><path fill="url(#tg)" d="M1 19c0-3 2-5 5-5 3-1 5-3 7-6 2-2 1-6 3-7 3-1 6 1 6 5 0 3-1 5-2 7h11c3 0 4 2 4 4 0 2-1 3-2 3 1 1 1 4-1 5 1 1 1 4-1 5 0 2-1 4-4 4H13c-2 0-3-1-5-1H6c-3 0-5-2-5-5z"/><path fill="none" stroke="#d98a10" stroke-width="1.2" d="M22 19h11 M22 24h10 M22 29h8"/></svg></div>

  <article class="msg out w444 gap-25 tile tailed-right">
    <div class="quote">
      <b class="author">Mr Charles</b>
      <p class="quoted">Tnx Isaac, I appreciate ur efforts</p>
      <svg class="scribble" viewBox="0 0 40 6"><path d="M1 5 C14 3 26 4 39 2"/></svg>
    </div>
    <div class="row"><span class="text">Thank you sir</span><span class="meta"><time class="stamp">04:16</time><svg class="ticks" viewBox="0 0 30 22"><path d="M1 13 L7 20 L20 2 M14 17 L16 20 L29 2"/></svg></span></div>
    <svg class="tail tail-right" viewBox="0 0 30 30"><path d="M0 0 H14 C15 12 20 22 27 28 C18 29 8 26 0 24z"/></svg>
  </article>

  <article class="msg in w380 gap-24 tailed-left">
    <div class="call">
      <div class="call-icon">
        <svg viewBox="0 0 32 30" class="call-svg"><path class="phone" d="M4 1C1 2 0 5 1 8c2 8 9 17 20 21 4 1 8 0 10-3 1-2 0-3-1-4l-5-4c-1-1-3-1-4 0l-3 3c-4-3-7-7-9-11l3-3c1-1 1-2 0-3L9 1C7 0 6 0 4 1z"/><path class="arrow" d="M31 1 L19 13 M19 4 V13 H29"/></svg>
      </div>
      <div class="call-copy"><strong>Voice call</strong><span>55 sec</span></div>
      <time class="stamp call-stamp">04:18</time>
    </div>
    <svg class="tail tail-left" viewBox="0 0 30 30"><path d="M14 0 C13 14 8 24 0 29 C8 30 18 30 30 28 V0z"/></svg>
  </article>

  <article class="msg out w424 gap-24">
    <div class="row plain"><span class="text">Good evening sir</span><span class="meta"><time class="stamp">13:12</time><svg class="ticks" viewBox="0 0 30 22"><path d="M1 13 L7 20 L20 2 M14 17 L16 20 L29 2"/></svg></span></div>
  </article>

  <article class="msg out w598">
    <div class="row plain wrapped"><span class="text">I would require access to submit the<br>paperwork and take Quiz</span><span class="meta"><time class="stamp">13:12</time><svg class="ticks" viewBox="0 0 30 22"><path d="M1 13 L7 20 L20 2 M14 17 L16 20 L29 2"/></svg></span></div>
  </article>
</main>

<button class="jump" type="button" aria-label="Scroll to latest">
  <svg viewBox="0 0 48 48" class="jump-icon"><circle cx="24" cy="24" r="22"/><path d="M14.5 20 L24 29 L33.5 20"/></svg>
</button>

<footer class="composer"><div class="input"></div></footer>
</div>
</body>
</html>
```

FILE: styles.css
```css
* { box-sizing: border-box; }
html, body { margin: 0; padding: 0; background: #000; }
.screen {
  position: relative;
  width: 828px;
  height: 1370px;
  overflow: hidden;
  display: flex;
  flex-direction: column;
  font-family: Inter, "Liberation Sans", sans-serif;
  color: #fff;
}
.doodles {
  position: absolute;
  inset: 0;
  width: 828px;
  height: 1370px;
  fill: none;
  stroke: #323232;
  stroke-width: 1.4;
  stroke-linecap: round;
  stroke-linejoin: round;
}
.dig {
  font-family: Inter, sans-serif;
  font-size: 25px;
  font-weight: 700;
  stroke-width: 1;
}
.chat {
  position: relative;
  flex: 1;
  min-height: 0;
  padding-top: 15px;
  display: flex;
  flex-direction: column;
  align-items: flex-start;
}
.msg {
  position: relative;
  margin-top: 6px;
  border-radius: 22px;
  flex: none;
}
.msg:first-child { margin-top: 0; }
.in { background: #343436; margin-left: 32px; align-self: flex-start; }
.out { background: #025045; margin-right: 32px; align-self: flex-end; }
.tile { padding-top: 8px; }
.w380 { width: 380px; height: 136px; padding: 8px; }
.w528 { width: 528px; }
.w620 { width: 620px; }
.w428 { width: 428px; }
.w444 { width: 444px; }
.w424 { width: 424px; }
.w598 { width: 598px; }
.gap-7 { margin-top: 7px; }
.gap-24 { margin-top: 24px; }
.gap-25 { margin-top: 25px; }

.call {
  height: 120px;
  background: #2a2a2c;
  border-radius: 14px;
  display: flex;
  align-items: center;
  padding-left: 16px;
  position: relative;
}
.call-icon {
  width: 88px;
  height: 88px;
  border-radius: 50%;
  background: #1a1a1c;
  display: flex;
  align-items: center;
  justify-content: center;
}
.call-svg { width: 32px; height: 30px; }
.phone { fill: #a8a8ad; }
.arrow { fill: none; stroke: #a8a8ad; stroke-width: 2; }
.call-copy {
  margin-left: 17px;
  display: flex;
  flex-direction: column;
  gap: 4px;
  align-self: flex-start;
  padding-top: 21px;
}
.call-copy strong { font-size: 29px; line-height: 36px; font-weight: 600; letter-spacing: -0.1px; }
.call-copy span { font-size: 28.5px; line-height: 36px; color: #98989d; }

.stamp {
  font-size: 23px;
  line-height: 28px;
  color: #98989d;
  letter-spacing: 0.3px;
  white-space: nowrap;
  font-variant-numeric: tabular-nums;
}
.call-stamp { position: absolute; right: 18px; bottom: 11px; }
.out .stamp { color: #86a8a1; }

.quote {
  position: relative;
  margin: 0 8px;
  padding: 21px 16px 22px 18px;
  background: #2a2a2c;
  border-radius: 14px;
  border-left: 8px solid #ff6f59;
  overflow: hidden;
}
.quote.tall { padding-bottom: 24px; }
.out .quote { background: #022c28; border-left-color: #fb6220; }
.author {
  display: block;
  font-size: 29px;
  line-height: 36px;
  font-weight: 600;
  color: #ff7359;
}
.out .author { color: #c9481a; }
.quoted {
  margin: 4px 0 0;
  font-size: 25.4px;
  line-height: 37px;
  color: #c2c2c6;
  white-space: nowrap;
}
.out .quoted { color: #87a09b; }
.file { width: 19px; height: 22px; fill: #77777b; vertical-align: -2px; }
.scribble {
  position: absolute;
  left: 40px;
  top: 49px;
  width: 38px;
  height: 6px;
  fill: none;
  stroke: #061412;
  stroke-width: 2;
  stroke-linecap: round;
}

.row {
  display: flex;
  justify-content: space-between;
  align-items: flex-end;
  padding: 10px 20px 9px 21px;
}
.row.plain { padding-top: 12px; }
.row.wrapped { padding-top: 11px; }
.text {
  font-size: 31.85px;
  line-height: 44px;
  margin-bottom: 5px;
  white-space: nowrap;
}
.meta { display: flex; align-items: center; gap: 8px; margin-right: -1px; }
.wrapped .meta { margin-left: -100px; }
.ticks {
  width: 31px;
  height: 22px;
  fill: none;
  stroke: #3aa0f2;
  stroke-width: 2.4;
  stroke-linecap: round;
  stroke-linejoin: round;
}

.reaction {
  position: relative;
  margin: -6px 0 0 52px;
  width: 72px;
  height: 50px;
  border-radius: 25px;
  background: #333335;
  border: 2px solid #1a2a30;
  display: flex;
  align-items: center;
  justify-content: center;
  flex: none;
}
.reaction.lower { margin-top: -8px; height: 51px; }
.emoji { width: 34px; height: 34px; }

.tail { position: absolute; width: 30px; height: 30px; }
.tail-left { left: -10px; bottom: -1px; fill: #343436; z-index: -1; }
.tail-right { right: -14px; bottom: -1px; fill: #025045; }
.chat .tailed-left { z-index: 0; }

.jump {
  position: absolute;
  right: -1px;
  top: 1195px;
  width: 109px;
  height: 80px;
  padding: 0;
  background: #1a1a1a;
  border: 1px solid #3a3a3a;
  border-radius: 16px 0 0 16px;
  display: flex;
  align-items: center;
  justify-content: center;
}
.jump-icon {
  width: 48px;
  height: 48px;
  fill: none;
  stroke: #1e96e6;
  stroke-width: 2.8;
  stroke-linecap: round;
  stroke-linejoin: round;
}
.composer {
  position: relative;
  flex: none;
  height: 18px;
  background: #1a1a1a;
  border-top: 1px solid #353535;
  padding: 13px 198px 0 105px;
}
.input {
  height: 30px;
  border: 1px solid #3e3e40;
  border-radius: 18px;
}
```
